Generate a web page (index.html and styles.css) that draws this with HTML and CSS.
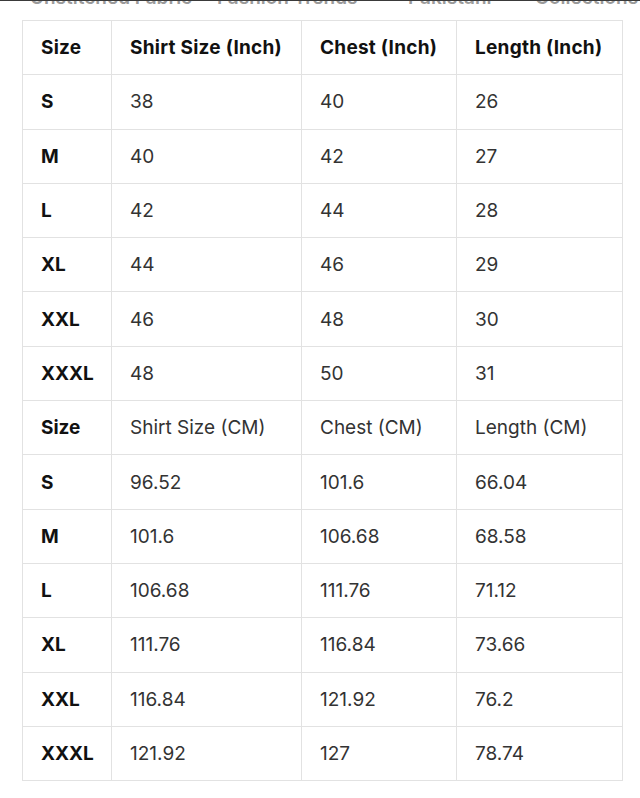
FILE: index.html
```html
<!DOCTYPE html>
<html lang="en">
<head>
<meta charset="utf-8">
<link rel="stylesheet" href="styles.css">
</head>
<body>
<div class="topstrip">
  <span class="frag f1">Unstitched Fabric</span>
  <span class="frag f2">Fashion Trends</span>
  <span class="frag f3">Pakistani</span>
  <span class="frag f4">Collections</span>
</div>
<table class="size-table">
  <colgroup>
    <col class="c1"><col class="c2"><col class="c3"><col class="c4">
  </colgroup>
  <tbody>
    <tr class="head"><td>Size</td><td>Shirt Size (Inch)</td><td>Chest (Inch)</td><td>Length (Inch)</td></tr>
    <tr><td>S</td><td>38</td><td>40</td><td>26</td></tr>
    <tr><td>M</td><td>40</td><td>42</td><td>27</td></tr>
    <tr><td>L</td><td>42</td><td>44</td><td>28</td></tr>
    <tr><td>XL</td><td>44</td><td>46</td><td>29</td></tr>
    <tr><td>XXL</td><td>46</td><td>48</td><td>30</td></tr>
    <tr><td>XXXL</td><td>48</td><td>50</td><td>31</td></tr>
    <tr><td>Size</td><td>Shirt Size (CM)</td><td>Chest (CM)</td><td>Length (CM)</td></tr>
    <tr><td>S</td><td>96.52</td><td>101.6</td><td>66.04</td></tr>
    <tr><td>M</td><td>101.6</td><td>106.68</td><td>68.58</td></tr>
    <tr><td>L</td><td>106.68</td><td>111.76</td><td>71.12</td></tr>
    <tr><td>XL</td><td>111.76</td><td>116.84</td><td>73.66</td></tr>
    <tr><td>XXL</td><td>116.84</td><td>121.92</td><td>76.2</td></tr>
    <tr><td>XXXL</td><td>121.92</td><td>127</td><td>78.74</td></tr>
  </tbody>
</table>
</body>
</html>
```
FILE: styles.css
```css
html, body {
  margin: 0;
  padding: 0;
  background: #ffffff;
}
body {
  font-family: Inter, "Noto Sans", sans-serif;
  color: #333333;
}
.topstrip {
  height: 5px;
  overflow: hidden;
  border-top: 1px solid #3a3a3a;
  display: flex;
  align-items: flex-end;
  font-size: 19px;
  line-height: 20px;
  font-weight: 600;
  color: #9a9a9a;
}
.frag {
  flex: none;
  line-height: 20px;
  margin-bottom: -2px;
  white-space: nowrap;
}
.f1 { margin-left: 30px; width: 187px; }
.f2 { width: 191px; }
.f3 { width: 127px; }
.f4 { width: 105px; }
.size-table {
  margin: 14px 0 0 22px;
  width: 600px;
  border-collapse: collapse;
  table-layout: fixed;
  font-size: 19px;
}
.c1 { width: 89px; }
.c2 { width: 190px; }
.c3 { width: 155px; }
.c4 { width: 166px; }
.size-table tr { height: 54.3px; }
.size-table td {
  border: 1px solid #e2e2e2;
  padding: 0 18px;
  vertical-align: middle;
  color: #333333;
  white-space: nowrap;
}
.size-table td:first-child {
  font-weight: 700;
  color: #111111;
}
.size-table tr.head td {
  font-weight: 700;
  color: #111111;
  letter-spacing: 0.25px;
}
```
